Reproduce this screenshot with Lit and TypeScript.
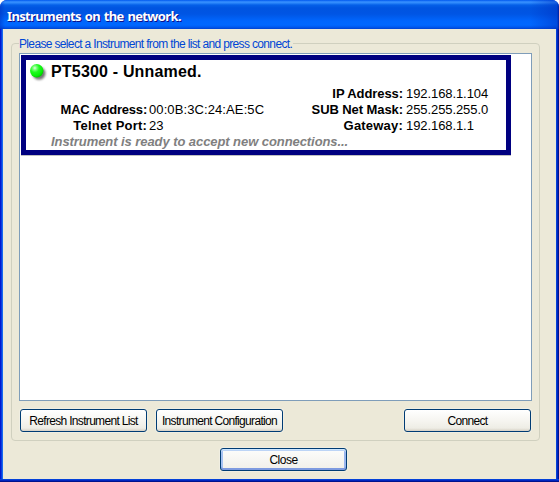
import { LitElement, html, css } from "lit";
import { customElement, property } from "lit/decorators.js";

@customElement("xp-button")
class XpButton extends LitElement {
  @property({ type: Boolean, reflect: true }) focused = false;
  static styles = css`
    :host { display: block; width: 127px; height: 23px; }
    button {
      box-sizing: border-box; display: flex; align-items: center; justify-content: center;
      width: 100%; height: 100%; padding: 1px 0 0; border: 1px solid #003c74; border-radius: 3px;
      background: linear-gradient(#ffffff, #f5f4ef 55%, #eeede5 86%, #d6d0c5);
      box-shadow: 0 0 0 1px #f0eee2;
      font: 12px/14px "Liberation Sans", Arial, sans-serif; color: #000; white-space: nowrap;
      letter-spacing: -0.68px;
    }
    :host([focused]) button {
      letter-spacing: -0.5px;
      background: linear-gradient(#fdfdfc, #f0efe9);
      box-shadow: 0 0 0 1px #f0eee2, inset 0 1px #cee7ff, inset 0 2px #bcd4f6,
        inset 0 -2px #7d9ae0, inset 2px 0 #a6c2f2, inset -2px 0 #9ab6ee;
    }
  `;
  render() {
    return html`<button><slot></slot></button>`;
  }
}

@customElement("instrument-card")
class InstrumentCard extends LitElement {
  static styles = css`
    :host {
      display: block; box-sizing: border-box; width: 490px; height: 100px; border: 5px solid #000080;
      box-shadow: 0 1px #c0c0c0; font: 13px/16px "Liberation Sans", Arial, sans-serif; color: #000;
      white-space: nowrap;
    }
    .head { display: flex; height: 26px; }
    .led { width: 20px; height: 20px; margin: 2px 0 0 2px; }
    .name { margin: 3px 0 0 3px; font-size: 16px; line-height: 18px; font-weight: bold; letter-spacing: 0.18px; }
    .facts { display: grid; grid-template-columns: 121px 131px 121px 1fr; column-gap: 2px; grid-template-rows: 16px 16px 16px; }
    b { text-align: right; }
    .mac { letter-spacing: -0.22px; }
    .port, .gate { letter-spacing: 0.2px; }
    .c1 { grid-column: 1; } .c2 { grid-column: 2; letter-spacing: 0.1px; } .c3 { grid-column: 3; }
    .ip, .mask { letter-spacing: -0.08px; }
    .c4 { grid-column: 4; padding-left: 1px; letter-spacing: -0.08px; }
    .r1 { grid-row: 1; } .r2 { grid-row: 2; } .r3 { grid-row: 3; }
    .state { margin-left: 25px; height: 16px; font-weight: bold; font-style: italic; color: #808080; letter-spacing: -0.07px; }
  `;
  render() {
    return html`
      <div class="head">
        <svg class="led" viewBox="0 0 20 20">
          <defs>
            <radialGradient id="g" cx=".36" cy=".3" r=".72">
              <stop offset="0" stop-color="#e0ffe0" /><stop offset=".2" stop-color="#7aff7a" />
              <stop offset=".45" stop-color="#1efc1e" /><stop offset=".8" stop-color="#08ee08" /><stop offset="1" stop-color="#00cc00" />
            </radialGradient>
            <filter id="s" x="-.4" y="-.4" width="1.8" height="1.8"><feGaussianBlur stdDeviation="1.2" /></filter>
          </defs>
          <circle cx="11" cy="11.3" r="6.5" fill="#555" opacity=".8" filter="url(#s)" />
          <circle cx="8.7" cy="8.7" r="6.7" fill="url(#g)" />
        </svg>
        <span class="name">PT5300 - Unnamed.</span>
      </div>
      <div class="facts">
        <b class="c3 r1 ip">IP Address:</b><span class="c4 r1">192.168.1.104</span>
        <b class="c1 r2 mac">MAC Address:</b><span class="c2 r2">00:0B:3C:24:AE:5C</span>
        <b class="c3 r2 mask">SUB Net Mask:</b><span class="c4 r2">255.255.255.0</span>
        <b class="c1 r3 port">Telnet Port:</b><span class="c2 r3">23</span>
        <b class="c3 r3 gate">Gateway:</b><span class="c4 r3">192.168.1.1</span>
      </div>
      <div class="state">Instrument is ready to accept new connections...</div>
    `;
  }
}

@customElement("app-root")
class AppRoot extends LitElement {
  static styles = css`
    :host { display: block; width: 559px; height: 482px; overflow: hidden; background: #fff; }
    .window {
      box-sizing: border-box; width: 559px; height: 482px; display: flex; flex-direction: column;
      border-radius: 7px 7px 0 0; overflow: hidden; background: #0831d9;
    }
    .title {
      box-sizing: border-box; height: 29px; flex: none; padding: 8px 0 0 7px;
      background: linear-gradient(90deg, #0030c080, transparent 5px, transparent 530px, #0030c080 557px, #001ea0),
        linear-gradient(#0058ee, #3a92ff 2px, #2a86fa 3px, #0560e8 5px, #0054e0 8px, #0055e4 14px, #0066fd 21px, #0068ff 25px, #005af0 27px, #0043cf 29px);
      font: bold 13px/16px "Noto Sans", sans-serif; letter-spacing: -0.64px; word-spacing: 1px; color: #fff;
      text-shadow: 1px 1px #0f1089; white-space: nowrap;
    }
    .frame {
      flex: 1; display: flex; padding: 0 3px 3px;
      background:
        linear-gradient(transparent 450px, #0441d8 450px, #0441d8 451px, #0026c0 451px, #0026c0 452px, #00138c 452px),
        linear-gradient(90deg, #0019cf 1px, #0a3be0 1px, #0a3be0 2px, #166aee 2px, #166aee 3px, transparent 3px, transparent 556px, #0441d8 556px, #0441d8 557px, #0026c0 557px, #0026c0 558px, #00138c 558px);
    }
    .body { flex: 1; display: flex; flex-direction: column; background: #ece9d8; padding: 7px 16px 8px 8px; }
    fieldset {
      box-sizing: border-box; width: 529px; height: 405px; margin: 0; padding: 0 7px 8px; min-width: 0;
      border: 1px solid #d0d0bf; border-radius: 4px;
    }
    legend {
      padding: 0 1px 0 0; height: 15px; font: 12px/17px "Liberation Sans", Arial, sans-serif; color: #0046d5;
      letter-spacing: -0.65px; white-space: nowrap;
    }
    .list {
      box-sizing: border-box; width: 513px; height: 348px; margin-top: 2px; padding: 1px;
      background: #fff; border: 1px solid #7f9db9;
    }
    .actions { display: flex; gap: 9px; padding: 8px 0 0 1px; }
    .connect { margin-left: 112px; }
    .close { margin: 7px 0 0 209px; }
  `;
  render() {
    return html`
      <div class="window">
        <div class="title">Instruments on the network.</div>
        <div class="frame"><div class="body">
          <fieldset>
            <legend>Please select a Instrument from the list and press connect.</legend>
            <div class="list"><instrument-card></instrument-card></div>
            <div class="actions">
              <xp-button>Refresh Instrument List</xp-button>
              <xp-button>Instrument Configuration</xp-button>
              <xp-button class="connect">Connect</xp-button>
            </div>
          </fieldset>
          <xp-button class="close" focused>Close</xp-button>
        </div></div>
      </div>
    `;
  }
}
